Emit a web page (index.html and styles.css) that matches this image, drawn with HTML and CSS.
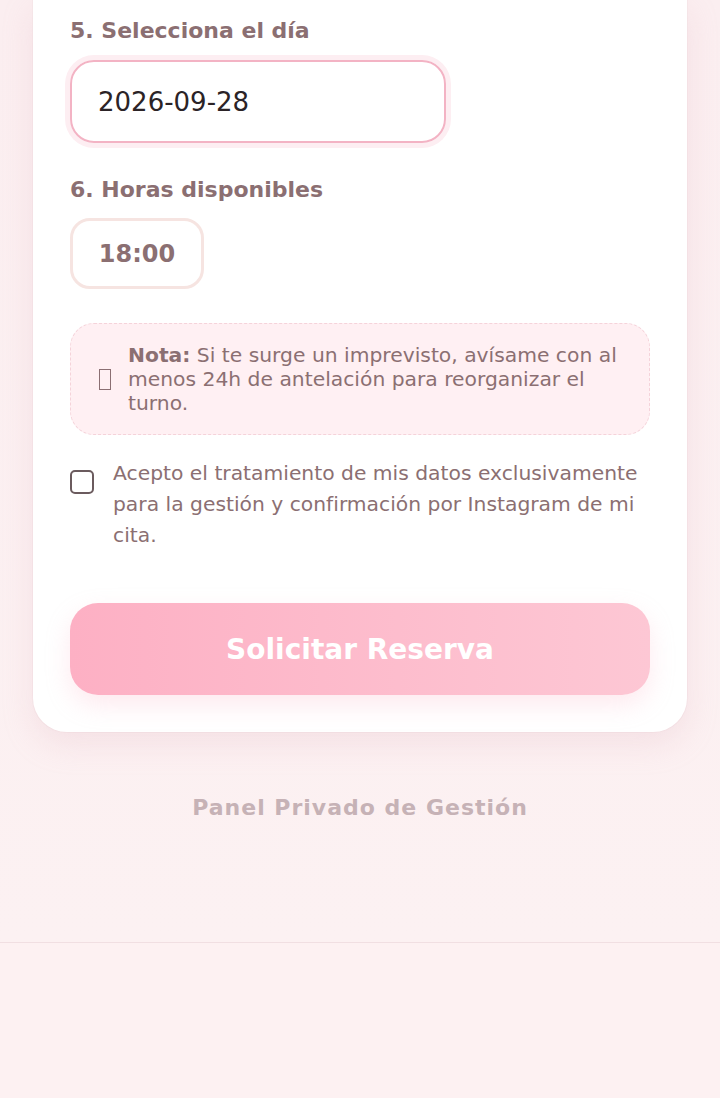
FILE: index.html
```html
<!DOCTYPE html>
<html lang="es">
<head>
<meta charset="utf-8">
<title>Reserva</title>
<link rel="stylesheet" href="styles.css">
</head>
<body>
<main class="page">
  <section class="card">
    <div class="field">
      <label class="label">5. Selecciona el día</label>
      <div class="date-input">2026-09-28</div>
    </div>
    <div class="field field-hours">
      <label class="label">6. Horas disponibles</label>
      <div class="slots">
        <button class="slot">18:00</button>
      </div>
    </div>
    <div class="note">
      <span class="note-icon"></span>
      <p class="note-text"><strong>Nota:</strong> Si te surge un imprevisto, avísame con al menos 24h de antelación para reorganizar el turno.</p>
    </div>
    <label class="consent">
      <span class="checkbox"></span>
      <span class="consent-text">Acepto el tratamiento de mis datos exclusivamente para la gestión y confirmación por Instagram de mi cita.</span>
    </label>
    <button class="submit">Solicitar Reserva</button>
  </section>
  <p class="admin-link">Panel Privado de Gestión</p>
</main>
<footer class="footer"></footer>
</body>
</html>
```
FILE: styles.css
```css
html, body {
  margin: 0;
  padding: 0;
}
body {
  background: #fcf0f2;
  font-family: "DejaVu Sans", sans-serif;
  color: #8b6f72;
  height: 1098px;
  overflow: hidden;
}
.page {
  height: 942px;
  background: linear-gradient(180deg, #fbeef0 0%, #fcf1f2 100%);
  display: flex;
  flex-direction: column;
  align-items: center;
}
.card {
  width: 654px;
  box-sizing: border-box;
  background: #ffffff;
  border-radius: 0 0 34px 34px;
  padding: 17px 37px 37px;
  box-shadow: 0 12px 30px rgba(226, 180, 190, 0.25), 0 0 0 1px #f7e9eb;
}
.label {
  display: block;
  font-size: 22px;
  line-height: 28px;
  font-weight: bold;
  color: #8b6f72;
}
.date-input {
  margin-top: 15px;
  width: 376px;
  height: 83px;
  box-sizing: border-box;
  border: 2px solid #f3b3c4;
  border-radius: 24px;
  box-shadow: 0 0 0 5px #fdeef2;
  padding-left: 26px;
  display: flex;
  align-items: center;
  font-size: 26px;
  color: #2b2326;
}
.field-hours {
  margin-top: 33px;
}
.slots {
  margin-top: 14px;
  display: flex;
}
.slot {
  width: 134px;
  height: 71px;
  border: 3px solid #f6e4e1;
  border-radius: 20px;
  background: #ffffff;
  font-family: "DejaVu Sans", sans-serif;
  font-weight: bold;
  font-size: 24px;
  color: #8b6f72;
  padding: 0;
}
.note {
  margin-top: 34px;
  background: #fff0f3;
  border: 1px dashed #f5d3da;
  border-radius: 24px;
  padding: 19px 24px 19px 28px;
  display: flex;
  align-items: center;
  gap: 17px;
}
.note-icon {
  flex: none;
  width: 10px;
  height: 19px;
  border: 1.5px solid #8b6f72;
}
.note-text {
  margin: 0;
  font-size: 20.3px;
  line-height: 24px;
  color: #8b6f72;
}
.consent {
  margin-top: 23px;
  display: flex;
  align-items: flex-start;
  gap: 19px;
}
.checkbox {
  flex: none;
  margin-top: 12px;
  width: 20px;
  height: 20px;
  border: 2px solid #6b5b5e;
  border-radius: 5px;
}
.consent-text {
  font-size: 20.3px;
  line-height: 31px;
  color: #8b6f72;
}
.submit {
  display: block;
  width: 100%;
  margin-top: 52px;
  height: 92px;
  border: none;
  border-radius: 28px;
  background: linear-gradient(90deg, #fdb0c4 0%, #fdc7d4 100%);
  box-shadow: 0 10px 24px rgba(250, 170, 190, 0.25);
  color: #ffffff;
  font-family: "DejaVu Sans", sans-serif;
  font-weight: bold;
  font-size: 28px;
}
.admin-link {
  margin: 62px 0 0;
  font-size: 22px;
  line-height: 28px;
  font-weight: bold;
  letter-spacing: 1px;
  color: #c6b2b6;
}
.footer {
  height: 156px;
  border-top: 1px solid #f1dfe2;
  background: #fdf1f2;
}
```
